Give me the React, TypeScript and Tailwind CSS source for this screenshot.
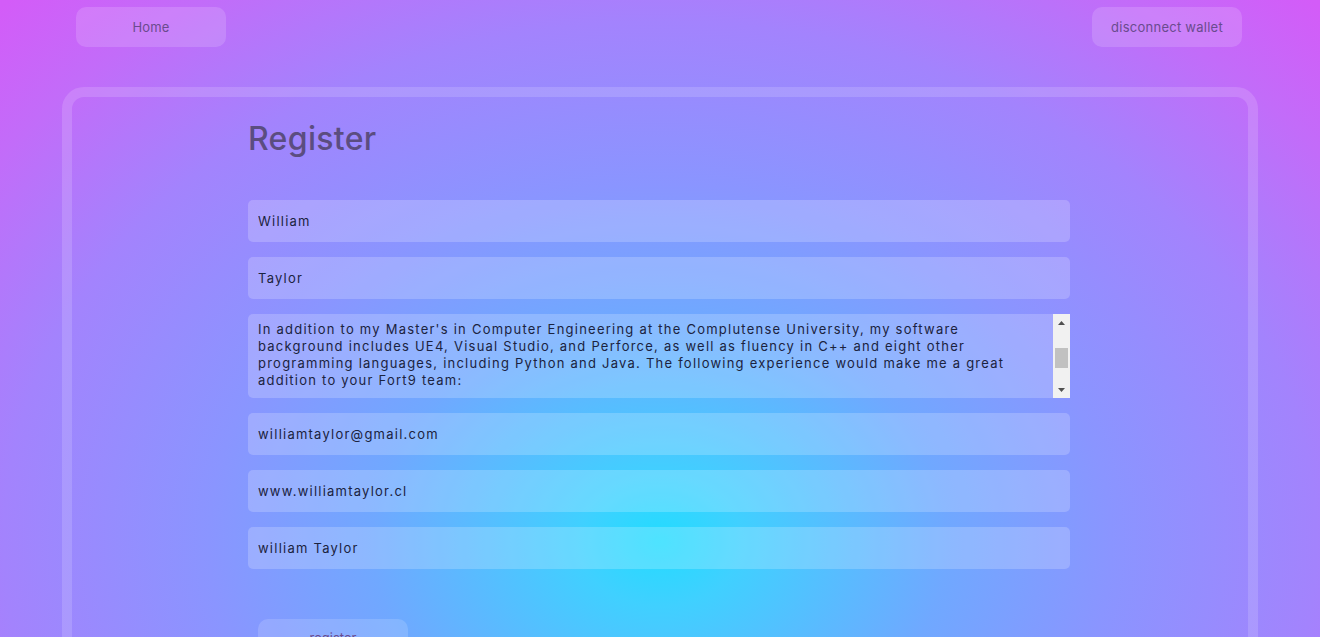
import React from "react";

const fieldCls =
  "w-full h-[42px] rounded-[5px] bg-white/20 px-[10px] text-[13px] tracking-[0.095em] text-[#1b2340] outline-none border-0";

function Scrollbar() {
  return (
    <div className="absolute right-0 top-0 flex h-full w-[17px] flex-col items-center bg-[#f1f1f1]">
      <div className="flex h-[17px] w-full items-center justify-center">
        <svg width="7" height="4" viewBox="0 0 7 4">
          <path d="M0 4 L3.5 0 L7 4 Z" fill="#505050" />
        </svg>
      </div>
      <div className="mt-[17px] h-[20px] w-[13px] bg-[#c1c1c1]" />
      <div className="flex-1" />
      <div className="flex h-[17px] w-full items-center justify-center">
        <svg width="7" height="4" viewBox="0 0 7 4">
          <path d="M0 0 L3.5 4 L7 0 Z" fill="#505050" />
        </svg>
      </div>
    </div>
  );
}

export default function App() {
  const bio =
    "In addition to my Master's in Computer Engineering at the Complutense University, my software background includes UE4, Visual Studio, and Perforce, as well as fluency in C++ and eight other programming languages, including Python and Java. The following experience would make me a great addition to your Fort9 team:\n\n- Developed gameplay systems and tools in Unreal Engine 4 for two shipped titles.\n- Optimized rendering pipelines and reduced frame times by 30%.\n- Collaborated with designers and artists in agile teams.";
  return (
    <div
      className="h-[637px] w-full overflow-hidden bg-[radial-gradient(ellipse_820px_650px_at_50%_85%,#22dcff_0%,#40d0ff_10%,#70a8ff_35%,#8a95ff_55%,#a383fd_80%,#c26cf9_100%,#d35cf8_115%)]"
      style={{ fontFamily: "Inter, 'Liberation Sans', sans-serif" }}
    >
      <nav className="flex justify-between pl-[76px] pr-[78px] pt-[7px]">
        <button className="h-[40px] w-[150px] rounded-[10px] bg-white/15 pt-[1px] text-[13px] tracking-[0.01em] text-[#6a4b8e]">
          Home
        </button>
        <button className="h-[40px] w-[150px] rounded-[10px] bg-white/15 pt-[1px] text-[13px] tracking-[0.02em] text-[#6a4b8e]">
          disconnect wallet
        </button>
      </nav>
      <div className="mx-[62px] mt-[40px] h-[600px] rounded-[22px] border-[10px] border-white/15">
        <div className="pl-[176px] pt-[18px]">
          <h1 className="text-[32px] font-medium leading-[48px] tracking-[0.01em] text-[#5b4d80]">Register</h1>
          <form className="mt-[37px] flex w-[822px] flex-col gap-[15px]">
            <input className={fieldCls} defaultValue="William" />
            <input className={fieldCls} defaultValue="Taylor" />
            <div className="relative h-[84px] w-full">
              <textarea
                className="block h-[84px] w-full resize-none overflow-hidden rounded-[5px] bg-white/20 pb-[6px] pl-[10px] pr-[27px] pt-[7px] text-[13px] leading-[17px] tracking-[0.095em] text-[#1b2340] outline-none [scrollbar-width:none]"
                defaultValue={bio}
              />
              <Scrollbar />
            </div>
            <input className={fieldCls} defaultValue="williamtaylor@gmail.com" />
            <input className={fieldCls} defaultValue="www.williamtaylor.cl" />
            <input className={fieldCls} defaultValue="william Taylor" />
          </form>
          <button className="ml-[10px] mt-[50px] h-[40px] w-[150px] rounded-[10px] bg-white/15 text-[13px] text-[#6a4b8e]">
            register
          </button>
        </div>
      </div>
    </div>
  );
}
